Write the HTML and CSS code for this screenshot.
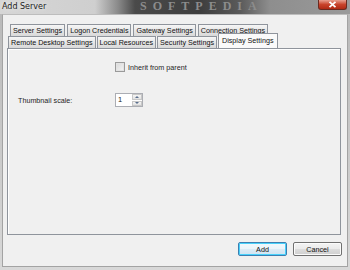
FILE: index.html
```html
<!DOCTYPE html>
<html>
<head>
<meta charset="utf-8">
<link rel="stylesheet" href="styles.css">
</head>
<body>
<div class="window">
  <div class="titlebar">
    <span class="title">Add Server</span>
    <span class="watermark">SOFTPEDIA</span>
    <span class="close"><svg width="9" height="7" viewBox="0 0 9 7"><path d="M1.5 0.8 L7.5 6.2 M7.5 0.8 L1.5 6.2" stroke="#fff" stroke-width="1.8"/></svg></span>
  </div>
  <div class="client">
    <div class="tabs">
      <div class="tabrow back">
        <div class="tab">Server Settings</div>
        <div class="tab">Logon Credentials</div>
        <div class="tab">Gateway Settings</div>
        <div class="tab">Connection Settings</div>
      </div>
      <div class="tabrow front">
        <div class="tab">Remote Desktop Settings</div>
        <div class="tab">Local Resources</div>
        <div class="tab">Security Settings</div>
        <div class="tab active">Display Settings</div>
      </div>
      <div class="panel">
        <label class="check"><span class="box"></span><span>Inherit from parent</span></label>
        <div class="field">
          <span class="label">Thumbnail scale:</span>
          <span class="spin"><span class="value">1</span><span class="arrows"><span class="arrow up"></span><span class="arrow down"></span></span></span>
        </div>
      </div>
    </div>
    <div class="buttons">
      <button class="btn default">Add</button>
      <button class="btn">Cancel</button>
    </div>
  </div>
</div>
</body>
</html>
```
FILE: styles.css
```css
html, body {
  margin: 0;
  padding: 0;
}
body {
  width: 350px;
  height: 270px;
  overflow: hidden;
  background: #c9cdd2;
  font-family: "Liberation Sans", Arial, sans-serif;
  font-size: 7.2px;
  color: #1e1e1e;
}
.window {
  width: 350px;
  height: 270px;
  display: flex;
  flex-direction: column;
  background: linear-gradient(to bottom, #b8b8b8, #d8d8d8);
}
.titlebar {
  position: relative;
  height: 14px;
  display: flex;
  align-items: flex-start;
  background: linear-gradient(to right, #d6d6d6 0px, #cfcfcf 95px, #8a8a8a 118px, #4a4a4a 135px, #3e3e3e 200px, #5a5a5a 240px, #8e8e8e 270px, #9a9a9a 350px);
  overflow: hidden;
}
.title {
  font-family: "DejaVu Sans", sans-serif;
  font-size: 8px;
  color: #222;
  margin: 2px 0 0 2px;
  text-shadow: 0 0 4px rgba(255,255,255,0.9);
}
.watermark {
  position: absolute;
  left: 140px;
  top: 0;
  font-family: "Liberation Serif", serif;
  font-size: 12px;
  line-height: 12px;
  letter-spacing: 6px;
  color: #8c8c8c;
  font-weight: bold;
}
.close {
  position: absolute;
  right: 3px;
  top: 0;
  width: 29px;
  height: 10px;
  border-radius: 0 0 3px 3px;
  background: linear-gradient(to bottom, #e8a090, #c8432b 50%, #b02a14);
  border: 1px solid #6b2a20;
  border-top: none;
  box-sizing: border-box;
  display: flex;
  align-items: center;
  justify-content: center;
}
.client {
  margin: 0 2px 0 2px;
  height: 253px;
  background: #f0f0f0;
  border: 1px solid #a3a3a3;
  border-top-color: #bdbdbd;
  box-sizing: border-box;
  display: flex;
  flex-direction: column;
}
.tabs {
  margin: 9px 6px 0 4px;
  display: flex;
  flex-direction: column;
}
.tabrow {
  display: flex;
  height: 12px;
}
.tabrow.back {
  margin-left: 3px;
  gap: 2px;
}
.tabrow.front {
  margin-left: 1px;
  gap: 1px;
  margin-top: 0;
  position: relative;
  z-index: 2;
}
.tab {
  height: 12px;
  box-sizing: border-box;
  padding: 0 2px;
  border: 1px solid #8f949c;
  border-bottom: none;
  background: linear-gradient(to bottom, #f6f6f6, #e6e6e6 50%, #d9d9d9);
  line-height: 11px;
  white-space: nowrap;
  color: #111;
}
.tab.active {
  height: 15px;
  margin-top: -3px;
  background: #fafafa;
  padding: 0 3px;
  line-height: 14px;
}
.panel {
  height: 187px;
  border: 1px solid #8f949c;
  background: #f0f0f0;
  box-shadow: inset 1px 1px 0 #fff;
  box-sizing: border-box;
  position: relative;
  z-index: 1;
  display: flex;
  flex-direction: column;
}
.check {
  display: flex;
  align-items: center;
  gap: 3px;
  margin: 13px 0 0 107px;
}
.box {
  width: 10px;
  height: 10px;
  box-sizing: border-box;
  border: 1px solid #9a9a9a;
  background: linear-gradient(135deg, #d8d8d8, #f4f4f4);
  box-shadow: inset 0 0 0 1px #e2e2e2;
}
.field {
  display: flex;
  align-items: center;
  margin: 21px 0 0 10px;
}
.label {
  width: 97px;
}
.spin {
  display: flex;
  width: 28px;
  height: 14px;
  box-sizing: border-box;
  border: 1px solid #abadb3;
  background: #fff;
}
.value {
  flex: 1;
  padding-left: 2px;
  line-height: 12px;
  font-size: 7.5px;
}
.arrows {
  width: 10px;
  display: flex;
  flex-direction: column;
  gap: 1px;
  padding: 0 0 0 0;
}
.arrow {
  flex: 1;
  border: 1px solid #c8c8c8;
  background: linear-gradient(#f4f4f4, #e2e2e2);
  box-sizing: border-box;
  display: flex;
  align-items: center;
  justify-content: center;
}
.arrow::after {
  content: "";
  border-left: 2px solid transparent;
  border-right: 2px solid transparent;
}
.arrow.up::after {
  border-bottom: 2px solid #5a6e8c;
}
.arrow.down::after {
  border-top: 2px solid #5a6e8c;
}
.buttons {
  display: flex;
  justify-content: flex-end;
  gap: 6px;
  margin: 7px 5px 0 0;
}
.btn {
  width: 49px;
  height: 14px;
  padding: 0;
  font-family: "Liberation Sans", Arial, sans-serif;
  font-size: 7.2px;
  color: #111;
  border: 1px solid #707070;
  border-radius: 2px;
  background: linear-gradient(to bottom, #f4f4f4, #ebebeb 50%, #dddddd 51%, #cfcfcf);
  box-shadow: inset 0 0 0 1px #fbfbfb;
}
.btn.default {
  border-color: #3c7fb1;
  box-shadow: inset 0 0 0 1px #48d1fb;
  background: linear-gradient(to bottom, #f2f8fc, #eaf4fa 50%, #dcecf6 51%, #cfe3f1);
}
```
